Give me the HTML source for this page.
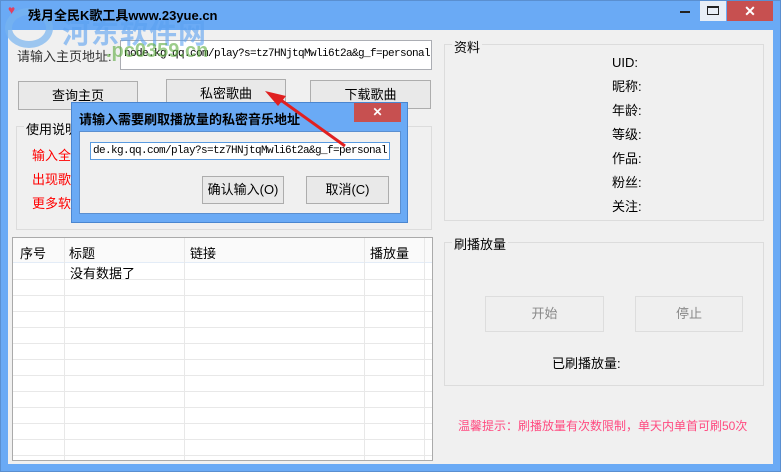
<!DOCTYPE html>
<html><head><meta charset="utf-8"><style>
*{margin:0;padding:0;box-sizing:border-box}
body{width:781px;height:472px;overflow:hidden;background:#6aaaf5;font-family:"Liberation Sans","Noto Sans CJK SC",sans-serif;font-size:12px;color:#000;position:relative}
.a{position:absolute}
.btn{position:absolute;background:#e9e9e9;border:1px solid #adadad;text-align:center;font-size:13px}
.grp{position:absolute;border:1px solid #dcdcdc}
.gl{position:absolute;background:#f0f0f0;padding:0 2px;font-size:12px}
.mono{font-family:"Liberation Mono","Noto Sans CJK SC",monospace;font-size:11px;letter-spacing:-0.6px}
</style></head><body>
<div class="a" style="left:0;top:0;width:781px;height:472px;border:1px solid #5a8fd0"></div>
<div class="a" style="left:8px;top:3px;width:14px;height:12px;color:#e04060;font-size:12px">♥</div>
<div class="a" style="left:680px;top:11px;width:10px;height:2px;background:#222"></div>
<div class="a" style="left:700px;top:1px;width:26px;height:20px;background:#e8eef6"><div class="a" style="left:7px;top:5px;width:12px;height:9px;border:1px solid #222;border-top-width:2px"></div></div>
<div class="a" style="left:727px;top:1px;width:46px;height:20px;background:#c75050;color:#fff;text-align:center;font-size:14px;font-weight:bold;line-height:20px">✕</div>
<div class="a" style="left:8px;top:30px;width:765px;height:434px;background:#f0f0f0"></div>
<div class="a" style="left:17px;top:46px;font-size:13px;color:#333">请输入主页地址:</div>
<div class="a mono" style="left:120px;top:40px;width:312px;height:30px;background:#fff;border:1px solid #abadb3;padding:7px 3px;white-space:nowrap;overflow:hidden">node.kg.qq.com/play?s=tz7HNjtqMwli6t2a&amp;g_f=personal</div>
<div class="a" style="left:5px;top:8px;width:48px;height:40px;border-radius:50%;border:7px solid rgba(120,180,240,.7)"></div>
<div class="a" style="left:62px;top:12px;font-size:28px;font-weight:bold;color:rgba(90,160,240,.6);letter-spacing:1px">河东软件网</div>
<div class="a" style="left:106px;top:40px;font-size:20px;font-weight:bold;color:rgba(90,170,60,.6)">.pc0359.cn</div>
<div class="a" style="left:28px;top:5px;font-size:13px;font-weight:bold">残月全民K歌工具www.23yue.cn</div>
<div class="btn" style="left:18px;top:81px;width:120px;height:29px;line-height:27px">查询主页</div>
<div class="btn" style="left:166px;top:79px;width:120px;height:29px;line-height:27px">私密歌曲</div>
<div class="btn" style="left:310px;top:80px;width:121px;height:29px;line-height:27px">下载歌曲</div>
<div class="grp" style="left:16px;top:126px;width:416px;height:104px"></div>
<div class="gl" style="left:24px;top:119px;font-size:13px">使用说明</div>
<div class="a" style="left:32px;top:145px;color:#f00;font-size:13px">输入全民</div>
<div class="a" style="left:32px;top:169px;color:#f00;font-size:13px">出现歌曲</div>
<div class="a" style="left:32px;top:193px;color:#f00;font-size:13px">更多软件</div>
<div class="a" style="left:12px;top:237px;width:421px;height:224px;background:#fff;border:1px solid #aaa;overflow:hidden">
<div class="a" style="left:0;top:0;width:419px;height:25px;background:#fafafa;border-bottom:1px solid #e3ecf7"></div>
<div class="a" style="left:7px;top:5px;font-size:13px">序号</div>
<div class="a" style="left:56px;top:5px;font-size:13px">标题</div>
<div class="a" style="left:177px;top:5px;font-size:13px">链接</div>
<div class="a" style="left:357px;top:5px;font-size:13px">播放量</div>
<div class="a" style="left:57px;top:25px;font-size:13px">没有数据了</div>
<svg class="a" style="left:0;top:0" width="419" height="222">
<g stroke="#e8e8e8" stroke-width="1">
<line x1="51.5" y1="0" x2="51.5" y2="222"/><line x1="171.5" y1="0" x2="171.5" y2="222"/><line x1="351.5" y1="0" x2="351.5" y2="222"/><line x1="411.5" y1="0" x2="411.5" y2="222"/>
<line x1="0" y1="41.5" x2="419" y2="41.5"/><line x1="0" y1="57.5" x2="419" y2="57.5"/><line x1="0" y1="73.5" x2="419" y2="73.5"/><line x1="0" y1="89.5" x2="419" y2="89.5"/><line x1="0" y1="105.5" x2="419" y2="105.5"/><line x1="0" y1="121.5" x2="419" y2="121.5"/><line x1="0" y1="137.5" x2="419" y2="137.5"/><line x1="0" y1="153.5" x2="419" y2="153.5"/><line x1="0" y1="169.5" x2="419" y2="169.5"/><line x1="0" y1="185.5" x2="419" y2="185.5"/><line x1="0" y1="201.5" x2="419" y2="201.5"/><line x1="0" y1="217.5" x2="419" y2="217.5"/>
</g></svg>
</div>
<div class="grp" style="left:444px;top:44px;width:320px;height:177px"></div>
<div class="gl" style="left:452px;top:37px;font-size:13px">资料</div>
<div class="a" style="left:612px;top:51px;font-size:13px;line-height:24px">UID:<br>昵称:<br>年龄:<br>等级:<br>作品:<br>粉丝:<br>关注:</div>
<div class="grp" style="left:444px;top:242px;width:320px;height:144px"></div>
<div class="gl" style="left:452px;top:234px;font-size:13px">刷播放量</div>
<div class="btn" style="left:485px;top:296px;width:119px;height:36px;line-height:34px;color:#888;background:#efefef;border-color:#ddd">开始</div>
<div class="btn" style="left:635px;top:296px;width:108px;height:36px;line-height:34px;color:#888;background:#efefef;border-color:#ddd">停止</div>
<div class="a" style="left:552px;top:353px;font-size:13px">已刷播放量:</div>
<div class="a" style="left:458px;top:417px;font-size:12px;color:#ff4a80">温馨提示：刷播放量有次数限制，单天内单首可刷50次</div>
<div class="a" style="left:71px;top:102px;width:337px;height:121px;background:#6aaaf5;border:1px solid #4a86d0"></div>
<div class="a" style="left:79px;top:109px;font-size:13px;font-weight:bold">请输入需要刷取播放量的私密音乐地址</div>
<div class="a" style="left:354px;top:103px;width:47px;height:19px;background:#c75050;color:#fff;text-align:center;font-weight:bold;line-height:19px">✕</div>
<div class="a" style="left:79px;top:131px;width:322px;height:83px;background:#f0f0f0;border:1px solid #5b8fd0"></div>
<div class="a mono" style="left:90px;top:142px;width:300px;height:18px;background:#fff;border:1px solid #5a9be0;padding:2px 2px;white-space:nowrap;overflow:hidden">de.kg.qq.com/play?s=tz7HNjtqMwli6t2a&amp;g_f=personal|</div>
<div class="btn" style="left:202px;top:176px;width:82px;height:28px;line-height:26px">确认输入(O)</div>
<div class="btn" style="left:306px;top:176px;width:83px;height:28px;line-height:26px">取消(C)</div>
<svg class="a" style="left:0;top:0" width="781" height="472"><line x1="345" y1="146" x2="278" y2="98" stroke="#e02020" stroke-width="3"/><polygon points="265,91 286,96 278,106" fill="#e02020"/></svg>
</body></html>
